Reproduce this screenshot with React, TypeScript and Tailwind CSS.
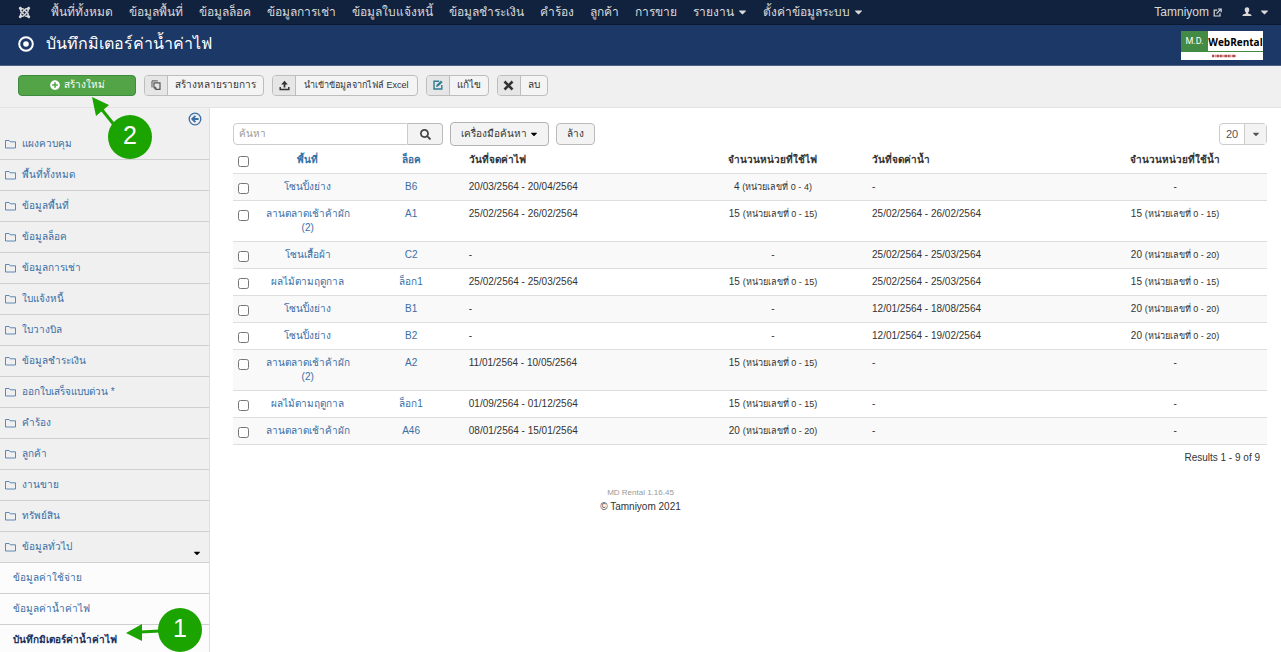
import { useState } from 'react';
import {
  FaJoomla,
  FaPlusCircle,
  FaSearch,
  FaCaretDown,
} from 'react-icons/fa';

interface MeterRow {
  area: string;
  lock: string;
  powerDate: string;
  powerUnits?: number;
  waterDate: string;
  waterUnits?: number;
}

const topMenu = [
  { label: 'พื้นที่ทั้งหมด' },
  { label: 'ข้อมูลพื้นที่' },
  { label: 'ข้อมูลล็อค' },
  { label: 'ข้อมูลการเช่า' },
  { label: 'ข้อมูลใบแจ้งหนี้' },
  { label: 'ข้อมูลชำระเงิน' },
  { label: 'คำร้อง' },
  { label: 'ลูกค้า' },
  { label: 'การขาย' },
  { label: 'รายงาน', dropdown: true },
  { label: 'ตั้งค่าข้อมูลระบบ', dropdown: true },
];

const sideMenu = [
  'แผงควบคุม',
  'พื้นที่ทั้งหมด',
  'ข้อมูลพื้นที่',
  'ข้อมูลล็อค',
  'ข้อมูลการเช่า',
  'ใบแจ้งหนี้',
  'ใบวางบิล',
  'ข้อมูลชำระเงิน',
  'ออกใบเสร็จแบบด่วน *',
  'คำร้อง',
  'ลูกค้า',
  'งานขาย',
  'ทรัพย์สิน',
];

const rows: MeterRow[] = [
  { area: 'โซนปิ้งย่าง', lock: 'B6', powerDate: '20/03/2564 - 20/04/2564', powerUnits: 4, waterDate: '-' },
  { area: 'ลานตลาดเช้าค้าผัก (2)', lock: 'A1', powerDate: '25/02/2564 - 26/02/2564', powerUnits: 15, waterDate: '25/02/2564 - 26/02/2564', waterUnits: 15 },
  { area: 'โซนเสื้อผ้า', lock: 'C2', powerDate: '-', waterDate: '25/02/2564 - 25/03/2564', waterUnits: 20 },
  { area: 'ผลไม้ตามฤดูกาล', lock: 'ล็อก1', powerDate: '25/02/2564 - 25/03/2564', powerUnits: 15, waterDate: '25/02/2564 - 25/03/2564', waterUnits: 15 },
  { area: 'โซนปิ้งย่าง', lock: 'B1', powerDate: '-', waterDate: '12/01/2564 - 18/08/2564', waterUnits: 20 },
  { area: 'โซนปิ้งย่าง', lock: 'B2', powerDate: '-', waterDate: '12/01/2564 - 19/02/2564', waterUnits: 20 },
  { area: 'ลานตลาดเช้าค้าผัก (2)', lock: 'A2', powerDate: '11/01/2564 - 10/05/2564', powerUnits: 15, waterDate: '-' },
  { area: 'ผลไม้ตามฤดูกาล', lock: 'ล็อก1', powerDate: '01/09/2564 - 01/12/2564', powerUnits: 15, waterDate: '-' },
  { area: 'ลานตลาดเช้าค้าผัก', lock: 'A46', powerDate: '08/01/2564 - 15/01/2564', powerUnits: 20, waterDate: '-' },
];

function FolderIcon() {
  return (
    <svg className="h-[11px] w-[11px] shrink-0" viewBox="0 0 11 11" fill="none" stroke="currentColor" strokeWidth="0.8">
      <path d="M0.5 9V1.5H4.2L5.2 2.8H10.5V9Z" />
    </svg>
  );
}

function TargetIcon() {
  return (
    <svg className="h-4 w-4" viewBox="0 0 16 16">
      <circle cx="8" cy="8" r="6.8" fill="none" stroke="currentColor" strokeWidth="2" />
      <circle cx="8" cy="8" r="2.8" fill="currentColor" />
    </svg>
  );
}

function UserIcon() {
  return (
    <svg className="h-[10px] w-[10px]" viewBox="0 0 10 10" fill="currentColor">
      <path d="M5 0.3C6.6 0.3 7.3 1.4 7.3 2.8C7.3 4 6.8 4.9 6.1 5.4V6.4L9 7.4C9.4 7.6 9.5 8.2 9.5 9H0.5C0.5 8.2 0.6 7.6 1 7.4L3.9 6.4V5.4C3.2 4.9 2.7 4 2.7 2.8C2.7 1.4 3.4 0.3 5 0.3Z" />
    </svg>
  );
}

function ExternalIcon() {
  return (
    <svg className="h-[9px] w-[9px]" viewBox="0 0 9 9" fill="none" stroke="currentColor" strokeWidth="1.2">
      <path d="M4.2 2.2H1.2V8H7V5.2M3.6 5.6L7.8 1.2M5 1H8.2V4.2" />
    </svg>
  );
}

function CopyIcon() {
  return (
    <svg className="h-[10px] w-[10px] text-[#555]" viewBox="0 0 10 10" fill="none" stroke="currentColor">
      <path d="M1 7.4V0.9H6.8" strokeWidth="1" />
      <path d="M3 2.8H9V9.3H4.8L3 7.5Z" strokeWidth="1.2" />
      <path d="M3 7.3H5V9.3" strokeWidth="0.9" />
    </svg>
  );
}

function UploadIcon() {
  return (
    <svg className="h-[11px] w-[11px]" viewBox="0 0 11 11" fill="currentColor">
      <path d="M5.5 0.8L8.8 4.4H6.4V7.6H4.6V4.4H2.2Z" />
      <path d="M1.2 7V9.4H9.8V7" fill="none" stroke="currentColor" strokeWidth="1.5" />
    </svg>
  );
}

function EditIcon() {
  return (
    <svg className="h-[10px] w-[10px] text-[#2f7d92]" viewBox="0 0 10 10" fill="none" stroke="currentColor">
      <path d="M6.2 1.2H1V9H8.8V5" strokeWidth="1.4" />
      <path d="M3.2 6.8L3.8 4.8L8 0.8L9.4 2.2L5.2 6.2Z" fill="currentColor" strokeWidth="0.3" />
    </svg>
  );
}

function DeleteIcon() {
  return (
    <svg className="h-[11px] w-[11px]" viewBox="0 0 11 11" fill="none" stroke="currentColor">
      <path d="M1.5 1.5L9.5 9.5M9.5 1.5L1.5 9.5" strokeWidth="2.6" />
    </svg>
  );
}

function CollapseIcon() {
  return (
    <svg className="h-[14px] w-[14px]" viewBox="0 0 14 14" fill="none" stroke="currentColor">
      <circle cx="7" cy="7" r="5.8" strokeWidth="1.3" />
      <path d="M7.4 3.8L4.2 7L7.4 10.2M4.4 7H10.6" strokeWidth="1.8" />
    </svg>
  );
}

interface ToolButtonProps {
  label: string;
  icon: React.ReactNode;
  /** Smaller text for long labels */
  compact?: boolean;
}

function ToolButton({ label, icon, compact }: ToolButtonProps) {
  return (
    <button className="flex h-[21px] items-stretch overflow-hidden rounded-sm border border-[#bdbdbd] bg-[#f4f4f4] text-[#333]">
      <span className="flex w-[23px] items-center justify-center border-r border-[#bdbdbd] bg-[#e6e6e6]">{icon}</span>
      <span className={`flex items-center ${compact ? 'px-2 text-[9px]' : 'px-[7px]'}`}>{label}</span>
    </button>
  );
}

function Units({ value }: { value?: number }) {
  if (value === undefined) return <>-</>;
  return (
    <>
      {value} <small className="text-[9px]">(หน่วยเลขที่ 0 - {value})</small>
    </>
  );
}

export default function App() {
  const [search, setSearch] = useState('');
  const [selected, setSelected] = useState<number[]>([]);

  const toggleRow = (index: number) => {
    setSelected((prev) => (prev.includes(index) ? prev.filter((i) => i !== index) : [...prev, index]));
  };

  const toggleAll = () => {
    setSelected(selected.length === rows.length ? [] : rows.map((_, i) => i));
  };

  return (
    <div className="relative flex h-screen flex-col overflow-hidden bg-white font-['Liberation_Sans',sans-serif] text-[10px] leading-[14px] text-[#333]">
      {/* Top menu */}
      <nav className="flex h-[25px] shrink-0 items-center border-b border-[#0b1830] bg-[#10223e] pr-3 pl-[18px] text-[12px] text-[#d9d9d9]">
        <a href="#" aria-label="Joomla" className="mr-5">
          <FaJoomla className="h-[13px] w-[13px]" />
        </a>
        <div className="flex gap-4">
          {topMenu.map((item) => (
            <a key={item.label} href="#" className="flex items-center gap-1 whitespace-nowrap">
              {item.label}
              {item.dropdown && <FaCaretDown className="h-3 w-[9px]" />}
            </a>
          ))}
        </div>
        <div className="ml-auto flex items-center">
          <a href="#" className="flex items-center gap-1">
            Tamniyom <ExternalIcon />
          </a>
          <button aria-label="User menu" className="ml-5 flex items-center gap-2">
            <UserIcon />
            <FaCaretDown className="h-3 w-[9px]" />
          </button>
        </div>
      </nav>

      {/* Page title */}
      <header className="flex h-[41px] shrink-0 items-center justify-between border-b border-[#495f85] bg-[#1c3867] px-[18px] text-white">
        <h1 className="flex items-center gap-3 pb-[2px] text-[16px] leading-6">
          <TargetIcon />
          บันทึกมิเตอร์ค่าน้ำค่าไฟ
        </h1>
        <div className="flex h-[29px] w-[82px] flex-col bg-white">
          <div className="flex h-5">
            <span className="flex w-[27px] items-center justify-center bg-[#438a45] font-['Roboto',sans-serif] text-[9px]">M.D.</span>
            <span className="flex flex-1 items-center justify-center pt-[2px] font-['Open_Sans',sans-serif] text-[10px] font-bold text-black">
              WebRental
            </span>
          </div>
          <svg className="h-[9px] w-full border-t border-[#438a45]" viewBox="0 0 82 8">
            <path d="M31 4H55" stroke="#b5494c" strokeWidth="2.4" strokeDasharray="2 0.6 1 0.8 3 0.5" />
          </svg>
        </div>
      </header>

      {/* Toolbar */}
      <div className="flex h-[42px] shrink-0 items-center gap-2 border-b border-[#e3e3e3] bg-[#f0f0f0] pb-[3px] pl-[18px]">
        <button className="flex h-[21px] w-[118px] items-center justify-center gap-1 rounded-sm border border-[#3f8a3f] bg-[#52a447] text-white">
          <FaPlusCircle className="h-[10px] w-[10px]" /> สร้างใหม่
        </button>
        <ToolButton label="สร้างหลายรายการ" icon={<CopyIcon />} />
        <ToolButton label="นำเข้าข้อมูลจากไฟล์ Excel" icon={<UploadIcon />} compact />
        <ToolButton label="แก้ไข" icon={<EditIcon />} />
        <ToolButton label="ลบ" icon={<DeleteIcon />} />
      </div>

      <div className="flex min-h-0 flex-1">
        {/* Sidebar */}
        <aside className="w-[210px] shrink-0 border-r border-[#dedede] bg-[#f0f0f0] text-[#3a6ea5]">
          <div className="flex h-[21px] items-center justify-end pr-[7px]">
            <button aria-label="Collapse sidebar">
              <CollapseIcon />
            </button>
          </div>
          <ul>
            {sideMenu.map((label) => (
              <li key={label} className="border-b border-[#cfcfcf]">
                <a href="#" className="flex h-[30px] items-center gap-[6px] pl-[5px]">
                  <FolderIcon /> {label}
                </a>
              </li>
            ))}
            <li className="border-b border-[#cfcfcf]">
              <a href="#" className="flex h-[30px] items-center gap-[6px] pr-2 pl-[5px]">
                <FolderIcon /> ข้อมูลทั่วไป
                <FaCaretDown className="mt-3 ml-auto h-[10px] w-2 text-black" />
              </a>
            </li>
            <li className="border-b border-[#cfcfcf] bg-[#fcfcfc]">
              <a href="#" className="flex h-[30px] items-center pl-[13px]">ข้อมูลค่าใช้จ่าย</a>
            </li>
            <li className="border-b border-[#cfcfcf] bg-[#fcfcfc]">
              <a href="#" className="flex h-[30px] items-center pl-[13px]">ข้อมูลค่าน้ำค่าไฟ</a>
            </li>
            <li className="bg-[#fcfcfc]">
              <a href="#" className="flex h-[30px] items-center pl-[13px] font-bold text-[#1b2f5b]">บันทึกมิเตอร์ค่าน้ำค่าไฟ</a>
            </li>
          </ul>
        </aside>

        <main className="min-w-0 flex-1 pt-[14px] pr-[14px] pl-[23px]">
          {/* Filters */}
          <div className="flex h-6 items-center">
            <div className="flex h-[22px] w-[210px]">
              <input
                type="text"
                aria-label="ค้นหา"
                placeholder="ค้นหา"
                value={search}
                onChange={(e) => setSearch(e.target.value)}
                className="min-w-0 flex-1 rounded-l-sm border border-[#ccc] px-[5px] outline-none placeholder:text-[#999]"
              />
              <button aria-label="Search" className="flex w-[35px] items-center justify-center rounded-r-sm border border-l-0 border-[#bbb] bg-[#f3f3f3]">
                <FaSearch className="h-[11px] w-[11px] text-[#444]" />
              </button>
            </div>
            <button className="ml-[7px] flex h-6 items-center gap-[3px] rounded-sm border border-[#b3b3b3] bg-[#f3f3f3] px-[10px]">
              เครื่องมือค้นหา <FaCaretDown className="h-[10px] w-2 text-black" />
            </button>
            <button className="ml-[7px] h-[22px] rounded-sm border border-[#bbb] bg-[#f3f3f3] px-[10px]">ล้าง</button>
            <button aria-label="Items per page" className="ml-auto flex h-[22px] w-12 items-stretch rounded-sm border border-[#ccc] text-[#555]">
              <span className="flex flex-1 items-center justify-center text-[11px]">20</span>
              <span className="flex w-[22px] items-center justify-center border-l border-[#ccc] bg-[#f3f3f3]">
                <FaCaretDown className="h-[10px] w-2" />
              </span>
            </button>
          </div>

          <table className="mt-px w-full table-fixed">
            <colgroup>
              <col className="w-[23px]" />
              <col className="w-[10%]" />
              <col className="w-[10%]" />
              <col className="w-[21%]" />
              <col className="w-[18%]" />
              <col className="w-[21%]" />
              <col />
            </colgroup>
            <thead>
              <tr className="align-top [&>th]:px-[6px] [&>th]:py-[6px]">
                <th className="text-left">
                  <input type="checkbox" aria-label="Select all" checked={selected.length === rows.length} onChange={toggleAll} className="mt-[3px] -ml-px block h-[11px] w-[11px]" />
                </th>
                <th><a href="#" className="text-[#3071a9]">พื้นที่</a></th>
                <th><a href="#" className="text-[#3071a9]">ล็อค</a></th>
                <th className="text-left">วันที่จดค่าไฟ</th>
                <th>จำนวนหน่วยที่ใช้ไฟ</th>
                <th className="text-left">วันที่จดค่าน้ำ</th>
                <th>จำนวนหน่วยที่ใช้น้ำ</th>
              </tr>
            </thead>
            <tbody>
              {rows.map((row, index) => (
                <tr key={index} className="border-t border-[#ddd] align-top last:border-b odd:bg-[#f9f9f9] [&>td]:px-[6px] [&>td]:py-[6px]">
                  <td>
                    <input type="checkbox" aria-label={`${row.area} ${row.lock}`} checked={selected.includes(index)} onChange={() => toggleRow(index)} className="mt-[3px] -ml-px block h-[11px] w-[11px]" />
                  </td>
                  <td className="text-center"><a href="#" className="text-[#3a6ea5]">{row.area}</a></td>
                  <td className="text-center"><a href="#" className="text-[#3a6ea5]">{row.lock}</a></td>
                  <td>{row.powerDate}</td>
                  <td className="text-center"><Units value={row.powerUnits} /></td>
                  <td>{row.waterDate}</td>
                  <td className="text-center"><Units value={row.waterUnits} /></td>
                </tr>
              ))}
            </tbody>
          </table>
          <p className="mt-[6px] pr-[7px] text-right">Results 1 - 9 of 9</p>

          <footer className="mt-[21px] pr-[219px] text-center">
            <p className="text-[8px] text-[#999]">MD Rental 1.16.45</p>
            <p>© Tamniyom 2021</p>
          </footer>
        </main>
      </div>

      {/* Step markers */}
      <svg className="pointer-events-none absolute top-0 left-0 h-[652px] w-[210px]" viewBox="0 0 210 652" fill="#1ba300">
        <path d="M99 106L115 126M140 632L160 631" stroke="#1ba300" strokeWidth="3" />
        <path d="M92 97L109 105L96 116ZM126 633L142 624V641Z" />
        <circle cx="130" cy="137" r="22" />
        <circle cx="180" cy="630" r="22" />
        <g fill="#fff" fontSize="25" textAnchor="middle" fontFamily="Liberation Sans, sans-serif">
          <text x="130" y="144">2</text>
          <text x="180" y="637">1</text>
        </g>
      </svg>
    </div>
  );
}
